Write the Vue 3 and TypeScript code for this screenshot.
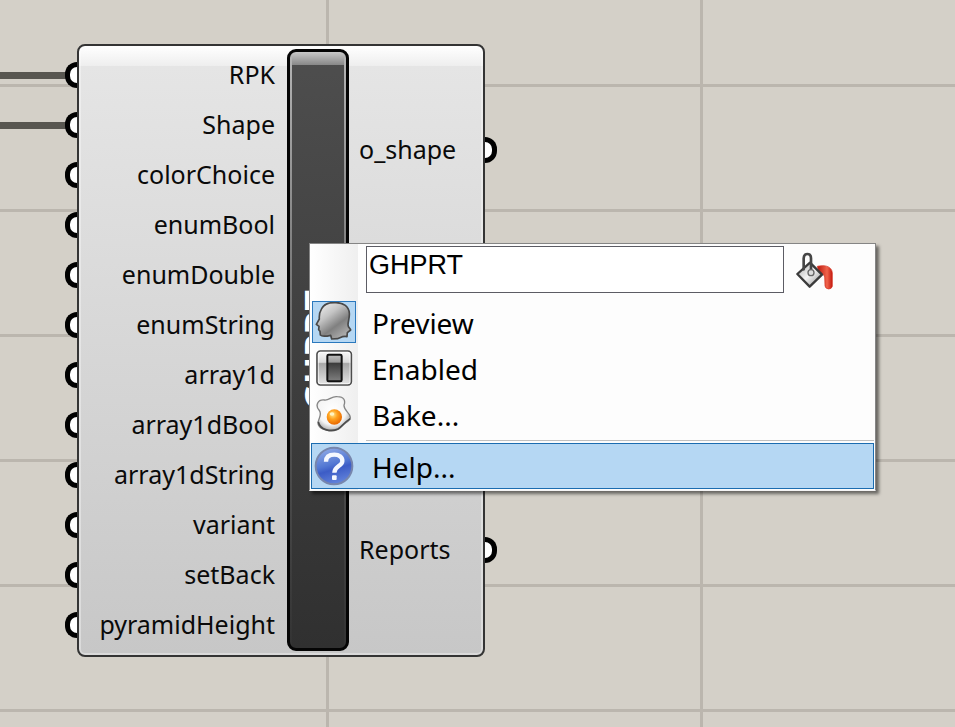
<script setup lang="ts">
import { ref } from 'vue'

interface InputParam {
  name: string
  wired: boolean
}

const componentName = ref('GHPRT')

const inputs: InputParam[] = [
  { name: 'RPK', wired: true },
  { name: 'Shape', wired: true },
  { name: 'colorChoice', wired: false },
  { name: 'enumBool', wired: false },
  { name: 'enumDouble', wired: false },
  { name: 'enumString', wired: false },
  { name: 'array1d', wired: false },
  { name: 'array1dBool', wired: false },
  { name: 'array1dString', wired: false },
  { name: 'variant', wired: false },
  { name: 'setBack', wired: false },
  { name: 'pyramidHeight', wired: false },
]

const outputs: string[] = ['o_shape', 'Reports']
</script>

<template>
  <main class="canvas">
    <section class="node">
      <ul class="inputs">
        <li v-for="param in inputs" :key="param.name" class="input-param">
          <span v-if="param.wired" class="wire"></span>
          <span class="grip grip-in"></span>
          {{ param.name }}
        </li>
      </ul>
      <div class="capsule">
        <span class="capsule-name">{{ componentName }}</span>
      </div>
      <ul class="outputs">
        <li v-for="name in outputs" :key="name" class="output-param">
          {{ name }}
          <span class="grip grip-out"></span>
        </li>
      </ul>
    </section>

    <div class="menu">
      <div class="menu-head">
        <input v-model="componentName" class="name-box" type="text" aria-label="Component name" />
        <button class="paint" type="button" aria-label="Colour">
          <svg width="40" height="40" viewBox="165 65 120 120">
            <defs>
              <linearGradient id="bucket" x1="0" y1="0" x2="1" y2="1">
                <stop offset="0" stop-color="#a8a8a8" />
                <stop offset="0.5" stop-color="#f4f4f4" />
                <stop offset="1" stop-color="#8a8a8a" />
              </linearGradient>
              <linearGradient id="pour" x1="0" y1="0" x2="1" y2="0">
                <stop offset="0" stop-color="#b8160c" />
                <stop offset="0.65" stop-color="#f0644c" />
                <stop offset="1" stop-color="#c2180e" />
              </linearGradient>
            </defs>
            <path d="M232 108C250 103 276 106 277 128L277 168Q275 176 266 176Q256 175 255 167L254 140C253 132 246 131 238 132Z" fill="url(#pour)" stroke="#d43020" stroke-width="2" />
            <path d="M210 97L246 133L209 169L172 131Z" fill="url(#bucket)" stroke="#3b3b3b" stroke-width="7" stroke-linejoin="round" />
            <path d="M191 117V84Q192 71 202 71Q213 71 213 84V122" fill="none" stroke="#464646" stroke-width="8" stroke-linecap="round" />
            <circle cx="213" cy="127" r="9" fill="#ddd" stroke="#666" stroke-width="4" />
          </svg>
        </button>
      </div>

      <button class="item" type="button">
        <span class="icon-cell">
          <span class="icon-frame">
            <svg width="42" height="40" viewBox="25 23 126 120">
              <defs>
                <linearGradient id="head" x1="0.1" y1="0" x2="0.8" y2="1">
                  <stop offset="0" stop-color="#f2f2f2" />
                  <stop offset="0.35" stop-color="#c4c4c4" />
                  <stop offset="0.65" stop-color="#808080" />
                  <stop offset="1" stop-color="#b5b5b5" />
                </linearGradient>
              </defs>
              <path d="M51 43C58 28 77 24 94 25C116 25 133 36 134 57C135 70 130 82 130 91C130 101 138 102 138 107L128 115L127 127C114 124 108 130 99 133L81 134L78 123C64 126 52 128 47 122L46 111L42 106L43 96L35 90L44 74C43 62 44 54 51 43Z" fill="url(#head)" stroke="#484848" stroke-width="5" stroke-linejoin="round" />
            </svg>
          </span>
        </span>
        <span class="item-text">Preview</span>
      </button>

      <button class="item" type="button">
        <span class="icon-cell">
          <svg width="38" height="38" viewBox="28 25 114 114">
            <defs>
              <linearGradient id="plate" x1="0" y1="0" x2="0" y2="1">
                <stop offset="0" stop-color="#fafafa" />
                <stop offset="0.33" stop-color="#dcdcdc" />
                <stop offset="0.37" stop-color="#a8a8a8" />
                <stop offset="1" stop-color="#e6e6e6" />
              </linearGradient>
              <linearGradient id="rocker" x1="0" y1="0" x2="0" y2="1">
                <stop offset="0" stop-color="#c0c0c0" />
                <stop offset="0.28" stop-color="#9a9a9a" />
                <stop offset="0.32" stop-color="#3c3c3c" />
                <stop offset="1" stop-color="#808080" />
              </linearGradient>
            </defs>
            <rect x="34" y="31" width="103" height="102" rx="10" fill="url(#plate)" stroke="#4c4c4c" stroke-width="5" />
            <rect x="38" y="35" width="95" height="94" rx="6" fill="none" stroke="#fff" stroke-opacity="0.7" stroke-width="3" />
            <rect x="65" y="42" width="43" height="80" rx="4" fill="url(#rocker)" stroke="#111" stroke-width="6" />
          </svg>
        </span>
        <span class="item-text">Enabled</span>
      </button>

      <button class="item" type="button">
        <span class="icon-cell">
          <svg width="38" height="38" viewBox="32 163 114 114">
            <defs>
              <radialGradient id="white" cx="0.45" cy="0.4" r="0.6">
                <stop offset="0" stop-color="#fff" />
                <stop offset="0.7" stop-color="#f5f5f5" />
                <stop offset="1" stop-color="#b0b0b0" />
              </radialGradient>
              <radialGradient id="yolk" cx="0.4" cy="0.35" r="0.65">
                <stop offset="0" stop-color="#ffe58c" />
                <stop offset="0.45" stop-color="#ffa21f" />
                <stop offset="1" stop-color="#e96a00" />
              </radialGradient>
            </defs>
            <path d="M60 178C75 180 82 165 99 168C120 168 124 180 119 194C118 211 139 217 138 231C136 243 121 246 113 256C103 267 86 273 69 269C47 265 38 254 42 242C45 229 54 220 44 208C32 194 40 176 60 178Z" fill="url(#white)" stroke="#858585" stroke-width="4" />
            <path d="M42 244C48 271 82 273 101 265C113 257 119 246 138 234" fill="none" stroke="#4c4c4c" stroke-width="5" />
            <circle cx="90" cy="229" r="23" fill="url(#yolk)" />
            <ellipse cx="83" cy="220" rx="7" ry="5" fill="#fff3c4" />
          </svg>
        </span>
        <span class="item-text">Bake...</span>
      </button>

      <div class="separator"></div>

      <button class="item item-active" type="button">
        <span class="icon-cell">
          <svg width="40" height="40" viewBox="25 30 120 120">
            <defs>
              <linearGradient id="ball" x1="0.3" y1="0" x2="0.6" y2="1">
                <stop offset="0" stop-color="#8fa9e6" />
                <stop offset="0.45" stop-color="#5378d3" />
                <stop offset="0.6" stop-color="#3c5cc6" />
                <stop offset="1" stop-color="#6485dc" />
              </linearGradient>
            </defs>
            <circle cx="85" cy="90" r="55" fill="url(#ball)" stroke="#7786ad" stroke-width="6" />
            <path d="M61 77C61 62 71 56 86 56C101 56 111 64 110 76C109 91 86 90 86 110" fill="none" stroke="#f5f8ff" stroke-width="13" />
            <rect x="79" y="118" width="14" height="14" rx="3" fill="#f5f8ff" />
          </svg>
        </span>
        <span class="item-text">Help...</span>
      </button>
    </div>
  </main>
</template>

<style>
body {
  margin: 0;
}
</style>

<style scoped>
.canvas {
  position: relative;
  min-height: 100vh;
  overflow: hidden;
  background-color: #d4d0c8;
  background-image:
    linear-gradient(#bbb6ae 3px, transparent 3px),
    linear-gradient(90deg, #bbb6ae 3px, transparent 3px);
  background-size: 100% 125px, 374px 100%;
  background-position: 0 84px, 326px 0;
  font-family: 'Noto Sans', 'Open Sans', sans-serif;
  color: #0a0a0a;
}

.node {
  position: absolute;
  left: 77px;
  top: 44px;
  box-sizing: border-box;
  width: 408px;
  display: flex;
  padding: 3px 0 4px;
  border: 2px solid #343434;
  border-radius: 8px;
  background:
    linear-gradient(#fff, #eeeeee) 0 0 / 100% 20px no-repeat,
    linear-gradient(#e6e6e6, #c7c7c7);
  box-shadow: inset 0 0 0 2px rgba(255, 255, 255, 0.35);
  font-size: 25px;
  line-height: 50px;
}

.inputs,
.outputs {
  margin: 0;
  padding: 0 0 2px;
  list-style: none;
}

.inputs {
  width: 208px;
}

.input-param {
  position: relative;
  padding-right: 12px;
  text-align: right;
}

.grip {
  position: absolute;
  box-sizing: border-box;
  width: 12px;
  height: 26px;
  border: 5px solid #000;
  background: #fff;
}

.grip-in {
  left: -14px;
  top: 13px;
  border-right: 0;
  border-radius: 13px 0 0 13px;
}

.grip-out {
  right: -14px;
  top: 88px;
  border-left: 0;
  border-radius: 0 13px 13px 0;
}

.wire {
  position: absolute;
  right: 100%;
  top: 23px;
  width: 80px;
  height: 7px;
  margin-right: 13px;
  background: #585650;
}

.capsule {
  box-sizing: border-box;
  width: 62px;
  display: flex;
  align-items: center;
  justify-content: center;
  border: 3px solid #050505;
  border-radius: 9px;
  background:
    linear-gradient(#b5b5b5, #555 60%, #333) 0 0 / 2px 100% no-repeat,
    linear-gradient(#b5b5b5, #555 60%, #333) 100% 0 / 2px 100% no-repeat,
    linear-gradient(#c8c8c8, #888) 0 0 / 100% 13px no-repeat,
    linear-gradient(#4e4e4e, #303030);
}

.capsule-name {
  writing-mode: vertical-rl;
  transform: rotate(180deg);
  color: #fff;
  font-size: 36px;
  font-weight: 700;
  line-height: 48px;
}

.outputs {
  flex: 1;
  display: flex;
  flex-direction: column;
  justify-content: space-between;
}

.output-param {
  position: relative;
  padding-left: 10px;
  line-height: 200px;
}

.menu {
  position: absolute;
  left: 309px;
  top: 243px;
  box-sizing: border-box;
  width: 567px;
  border: 1px solid #858585;
  border-bottom-color: #f4f4f4;
  background: linear-gradient(90deg, #fff, #efefef) 0 0 / 48px 100% no-repeat #fdfdfd;
  box-shadow: 3px 3px 3px rgba(0, 0, 0, 0.5);
}

.menu-head {
  display: flex;
  align-items: flex-start;
  gap: 11px;
  height: 53px;
  padding: 2px 40px 0 56px;
}

.name-box {
  flex: 1;
  min-width: 0;
  box-sizing: border-box;
  height: 47px;
  margin: 0;
  padding: 0 2px 9px;
  border: 1px solid #5c5c64;
  background: #fff;
  color: #000;
  font-family: 'Liberation Sans', Arial, sans-serif;
  font-size: 27px;
  outline: none;
}

.paint {
  display: flex;
  padding: 6px 0 0;
  border: 0;
  background: none;
}

.item {
  box-sizing: border-box;
  width: 100%;
  height: 46px;
  display: flex;
  align-items: center;
  gap: 14px;
  padding: 0;
  border: 0;
  background: none;
  color: #000;
  font-family: inherit;
  font-size: 28px;
  line-height: 40px;
  text-align: left;
}

.item-text {
  padding-top: 2px;
}

.icon-cell {
  width: 48px;
  display: flex;
  justify-content: center;
}

.icon-frame {
  display: flex;
  border: 1px solid #2a78bd;
  background: #b5d7f3;
}

.separator {
  height: 1px;
  margin: 3px 1px 2px 56px;
  background: #c0c0c0;
}

.item-active {
  width: calc(100% - 2px);
  gap: 16px;
  margin: 0 1px 1px;
  border: 1px solid #1b6cb0;
  background: #b5d7f3;
}

.item-active .icon-cell {
  width: 44px;
}
</style>
